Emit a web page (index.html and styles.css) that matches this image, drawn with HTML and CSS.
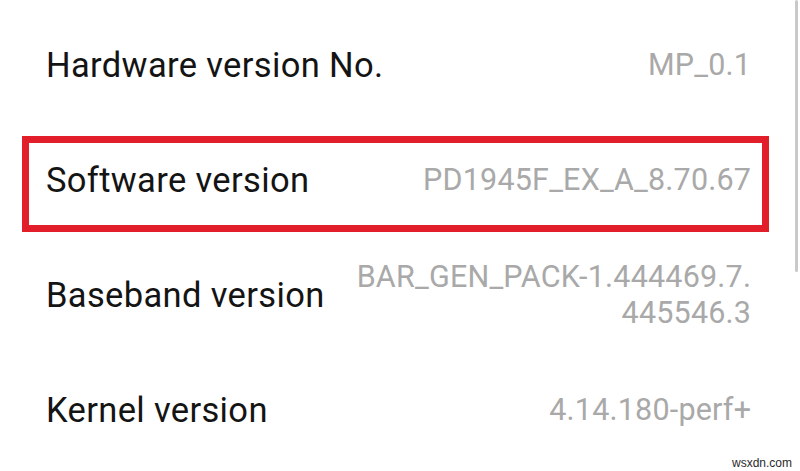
FILE: index.html
```html
<!DOCTYPE html>
<html lang="en">
<head>
<meta charset="utf-8">
<title>About phone</title>
<link rel="stylesheet" href="styles.css">
</head>
<body>
<div class="screen">
  <div class="list">
    <div class="row">
      <div class="label">Hardware version No.</div>
      <div class="value">MP_0.1</div>
    </div>
    <div class="row row-highlight">
      <div class="label">Software version</div>
      <div class="value">PD1945F_EX_A_8.70.67</div>
    </div>
    <div class="row">
      <div class="label">Baseband version</div>
      <div class="value">BAR_GEN_PACK-1.444469.7.<br>445546.3</div>
    </div>
    <div class="row">
      <div class="label">Kernel version</div>
      <div class="value">4.14.180-perf+</div>
    </div>
  </div>
  <div class="scrollbar"></div>
  <div class="watermark">wsxdn.com</div>
</div>
</body>
</html>
```

FILE: styles.css
```css
html, body {
  margin: 0;
  padding: 0;
  background: #ffffff;
}

.screen {
  position: relative;
  width: 800px;
  height: 471px;
  overflow: hidden;
  background: #ffffff;
  font-family: Roboto, "Noto Sans", "Liberation Sans", sans-serif;
}

.list {
  display: flex;
  flex-direction: column;
  padding-top: 7px;
}

.row {
  position: relative;
  display: flex;
  align-items: center;
  justify-content: space-between;
  height: 115px;
  padding: 0 49px 0 46px;
  box-sizing: border-box;
}

.label {
  font-size: 34.5px;
  letter-spacing: 0.35px;
  color: #141414;
  white-space: nowrap;
}

.value {
  font-size: 30.5px;
  letter-spacing: 0.2px;
  line-height: 36px;
  color: #a9a9a9;
  text-align: right;
  white-space: nowrap;
  margin-right: -0.2px;
}

.row-highlight::after {
  content: "";
  position: absolute;
  left: 22px;
  top: 14px;
  width: 747px;
  height: 96px;
  box-sizing: border-box;
  border: 7px solid #e31e2b;
}

.scrollbar {
  position: absolute;
  top: 0;
  right: 2px;
  width: 3px;
  height: 272px;
  background: #c9c9c9;
  border-radius: 2px;
}

.watermark {
  position: absolute;
  right: 8px;
  bottom: 1px;
  font-family: "Liberation Sans", Arial, sans-serif;
  font-size: 12px;
  color: #2a2a2a;
}
```
